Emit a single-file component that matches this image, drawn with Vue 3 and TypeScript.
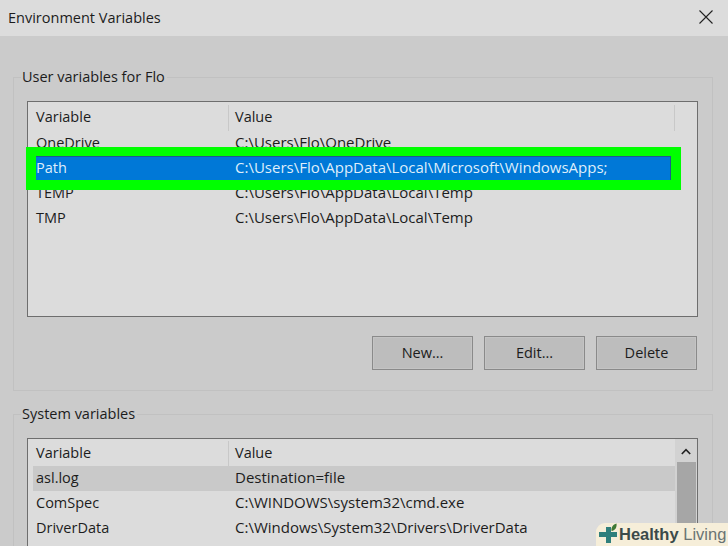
<script setup lang="ts">
interface Row { name: string; value: string; selected?: boolean; hover?: boolean }
const userRows: Row[] = [
  { name: 'OneDrive', value: 'C:\\Users\\Flo\\OneDrive' },
  { name: 'Path', value: 'C:\\Users\\Flo\\AppData\\Local\\Microsoft\\WindowsApps;', selected: true },
  { name: 'TEMP', value: 'C:\\Users\\Flo\\AppData\\Local\\Temp' },
  { name: 'TMP', value: 'C:\\Users\\Flo\\AppData\\Local\\Temp' },
]
const systemRows: Row[] = [
  { name: 'asl.log', value: 'Destination=file', hover: true },
  { name: 'ComSpec', value: 'C:\\WINDOWS\\system32\\cmd.exe' },
  { name: 'DriverData', value: 'C:\\Windows\\System32\\Drivers\\DriverData' },
]
const buttons = ['New...', 'Edit...', 'Delete']
</script>

<template>
  <div class="dialog">
    <header class="titlebar">
      <span>Environment Variables</span>
      <svg class="close" width="14" height="14" viewBox="0 0 14 14">
        <path d="M0.5 0.5 L13.5 13.5 M13.5 0.5 L0.5 13.5" stroke="#222" stroke-width="1.1" fill="none" />
      </svg>
    </header>
    <main class="content">
      <section class="group user">
        <h2 class="legend">User variables for Flo</h2>
        <div class="list user-list">
          <div class="head">
            <div class="col-name">Variable</div>
            <div class="col-value">Value</div>
            <div class="col-rest"></div>
          </div>
          <div v-for="r in userRows" :key="r.name" class="row" :class="{ selected: r.selected }">
            <div class="cell-name">{{ r.name }}</div>
            <div class="cell-value">{{ r.value }}</div>
          </div>
        </div>
        <div class="buttons">
          <button v-for="b in buttons" :key="b" class="btn" type="button">{{ b }}</button>
        </div>
      </section>
      <section class="group system">
        <h2 class="legend">System variables</h2>
        <div class="list system-list">
          <div class="system-main">
            <div class="head">
              <div class="col-name">Variable</div>
              <div class="col-value">Value</div>
            </div>
            <div v-for="r in systemRows" :key="r.name" class="row" :class="{ hover: r.hover }">
              <div class="cell-name">{{ r.name }}</div>
              <div class="cell-value">{{ r.value }}</div>
            </div>
          </div>
          <div class="scrollbar">
            <svg class="arrow" width="10" height="7" viewBox="0 0 10 7">
              <path d="M0.8 6 L5 1.6 L9.2 6" stroke="#222" stroke-width="1.6" fill="none" />
            </svg>
            <div class="thumb"></div>
          </div>
        </div>
      </section>
    </main>
    <div class="badge">
      <svg class="logo" width="20" height="22" viewBox="0 0 20 22">
        <path d="M8 4 H13 V9 H19 V14 H13 V20 H8 V14 H1 V9 H8 Z" fill="#2f7f7c" />
        <path d="M13.5 8 C13 4 15 1.5 18.5 0.5 C19 4 17.5 7.5 13.5 8 Z" fill="#3f7a35" />
      </svg>
      <span class="brand"><b>Healthy</b> <span>Living</span></span>
    </div>
  </div>
</template>

<style>
html, body { margin: 0; padding: 0; }
</style>

<style scoped>
.dialog {
  position: relative;
  width: 728px;
  height: 546px;
  overflow: hidden;
  background: #cbcbcb;
  color: #1c1c1c;
  font-family: "Open Sans", "Noto Sans", sans-serif;
  font-size: 14.5px;
}
.titlebar {
  height: 36px;
  background: #dcdcdc;
  display: flex;
  align-items: center;
  justify-content: space-between;
  padding: 0 9px 2px 8px;
  box-sizing: border-box;
}
.close { margin-right: 6px; margin-top: -1px; }
.content {
  padding: 41px 15px 0 13px;
  display: flex;
  flex-direction: column;
  gap: 23px;
}
.group {
  position: relative;
  border: 1px solid #c1c1c1;
  box-sizing: border-box;
  padding: 23px 14px 0 13px;
}
.user { height: 314px; }
.system { height: 200px; }
.legend {
  position: absolute;
  left: 7px;
  top: -11px;
  margin: 0;
  padding: 0 2px 0 1px;
  background: #cbcbcb;
  font: inherit;
  line-height: 20px;
}
.list {
  background: #dcdcdc;
  border: 1px solid #6e6e6e;
  box-sizing: border-box;
  width: 671px;
}
.user-list { height: 216px; padding-left: 8px; padding-right: 22px; }
.system-list { height: 130px; display: flex; padding-left: 5px; }
.system-main { flex: 1; min-width: 0; }
.head {
  display: flex;
  height: 29px;
  align-items: center;
}
.col-name {
  width: 192px;
  height: 26px;
  line-height: 24px;
  border-right: 1px solid #c8c8c8;
  margin-top: 2px;
}
.col-value { flex: 1; padding-left: 6px; height: 26px; line-height: 24px; margin-top: 2px; }
.col-rest { width: 0; height: 26px; border-right: 1px solid #c8c8c8; margin-top: 2px; }
.system-main .head { padding-left: 3px; height: 27px; }
.row {
  display: flex;
  height: 25px;
  align-items: baseline;
  line-height: 22px;
  position: relative;
}
.system-main .row { padding-left: 3px; }
.cell-name { width: 193px; }
.cell-value { padding-left: 6px; white-space: nowrap; font-size: 15px; }
.row.selected {
  background: #0078d7;
  color: #dfeefb;
  height: 24px;
  margin-right: 4px;
  box-shadow: inset 0 1px 0 #20598f, inset -1px 0 0 #20598f;
  z-index: 2;
}
.row.selected::before {
  content: "";
  position: absolute;
  inset: -9px -10px -10px -10px;
  border: 10px solid #00ff00;
  border-top-width: 9px;
  pointer-events: none;
}
.row.selected + .row { margin-top: 1px; }
.row.hover { background: #c9c9c9; }
.buttons {
  display: flex;
  justify-content: flex-end;
  gap: 11px;
  margin-top: 19px;
  width: 670px;
}
.btn {
  width: 101px;
  height: 34px;
  padding: 0 0 2px;
  font: inherit;
  color: inherit;
  background: #bdbdbd;
  border: 1px solid #8a8a8a;
  box-shadow: inset 0 0 0 1px #c4c4c4;
}
.scrollbar {
  width: 22px;
  flex: none;
  display: flex;
  flex-direction: column;
  align-items: center;
  background: #d2d2d2;
}
.arrow { margin-top: 9px; margin-bottom: 7px; }
.thumb { width: 19px; flex: 1; background: #a6a6a6; }
.badge {
  position: absolute;
  right: 0;
  bottom: 0;
  width: 132px;
  height: 23px;
  background: #f6eed9;
  border-top-left-radius: 9px;
  display: flex;
  align-items: center;
  padding-left: 2px;
  box-sizing: border-box;
  gap: 1px;
}
.logo { margin-top: -1px; flex: none; }
.brand {
  font-family: "Liberation Sans", Arial, sans-serif;
  font-size: 16.5px;
  color: #6a7474;
  white-space: nowrap;
}
.brand b { color: #3b4a4a; }
</style>
